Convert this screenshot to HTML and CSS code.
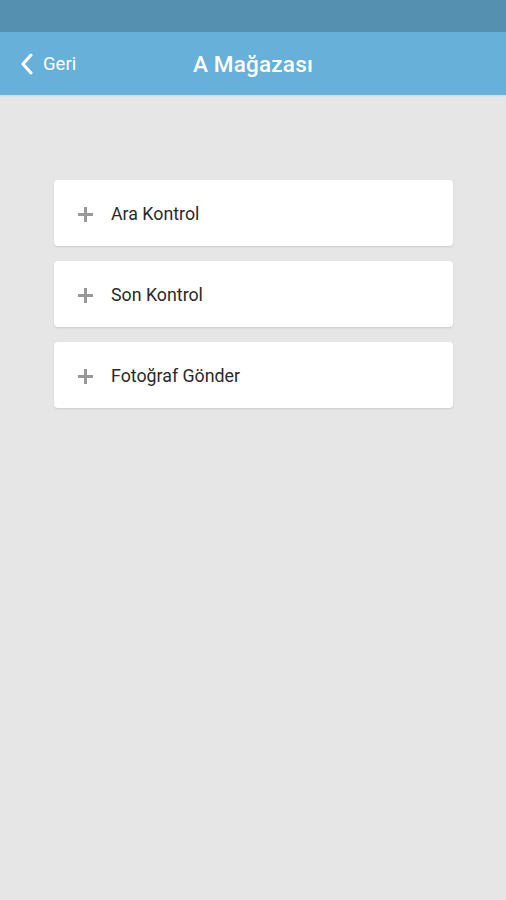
FILE: index.html
```html
<!DOCTYPE html>
<html lang="tr">
<head>
	<meta charset="UTF-8">
	<title>A Mağazası</title>
	<link rel="stylesheet" href="styles.css">
</head>
<body>
	<div class="statusBar"></div>
	<div class="header">
		<a class="back" href="#">
			<svg width="14" height="22" viewBox="0 0 14 22"><path d="M11 2 L3 11 L11 20" fill="none" stroke="#fff" stroke-width="3" stroke-linecap="round" stroke-linejoin="round"/></svg>
			<span>Geri</span>
		</a>
		<h1>A Mağazası</h1>
	</div>

	<ul class="list">
		<li><span class="plus"></span>Ara Kontrol</li>
		<li><span class="plus"></span>Son Kontrol</li>
		<li><span class="plus"></span>Fotoğraf Gönder</li>
	</ul>
</body>
</html>
```

FILE: styles.css
```css
* {padding: 0; margin: 0; box-sizing: border-box;}
li {list-style: none;}
html, body {height: 100%;}
body {background: #e6e6e6; font-family: Roboto, "Liberation Sans", sans-serif;}

.statusBar {height: 32px; background: #5690b1;}
.header {height: 63px; background: #67b0da; position: relative; display: flex; align-items: center; justify-content: center; box-shadow: 0 1px 2px rgba(0,0,0,.08);}
.header h1 {font-size: 22.5px; font-weight: 500; color: #fff; letter-spacing: .2px;}
.back {position: absolute; left: 20px; top: 0; height: 100%; display: flex; align-items: center; gap: 9px; color: #fff; text-decoration: none; font-size: 18.5px;}
.back span {margin-top: 1px;}

.list {padding: 85px 53px 0 54px; display: flex; flex-direction: column; gap: 15px;}
.list li {height: 66px; background: #fff; border-radius: 4px; box-shadow: 0 1px 2px rgba(0,0,0,.12); display: flex; align-items: center; padding-left: 24px; font-size: 17.8px; color: #2a2a2a;}
.plus {width: 15px; height: 15px; position: relative; margin-right: 18px; margin-top: 2px;}
.plus:before, .plus:after {content: ""; position: absolute; background: #999;}
.plus:before {left: 0; right: 0; top: 6px; height: 3px;}
.plus:after {top: 0; bottom: 0; left: 6px; width: 3px;}
```
